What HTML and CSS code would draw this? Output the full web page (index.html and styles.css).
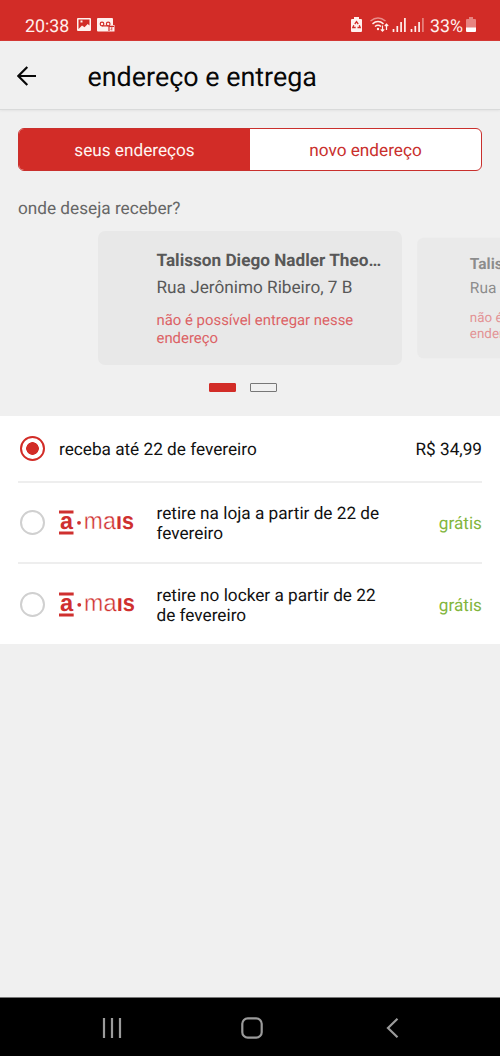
FILE: index.html
```html
<!DOCTYPE html>
<html lang="pt-BR">
<head>
<meta charset="utf-8">
<title>endereço e entrega</title>
<link rel="stylesheet" href="styles.css">
</head>
<body>
<div class="screen">
  <div class="status">
    <span class="clock">20:38</span>
    <svg class="status-left" width="40" height="16" viewBox="0 0 40 16">
      <path fill="#fff0ed" fill-rule="evenodd" d="M1 1h12a1 1 0 0 1 1 1v11a1 1 0 0 1-1 1H1a1 1 0 0 1-1-1V2a1 1 0 0 1 1-1zM1.500 2.500v9.500l3.500-3.500 2.500 1.800 3.200-3.300 1.800 1.500V2.500zM3.500 3.500h2v2h-2z"/>
      <path fill="#fff0ed" d="M21 1h14q1 0 1 1v6h1.500v6.500H21q-1 0-1-1V2q0-1 1-1z"/>
      <g fill="none" stroke="#d22c27" stroke-width="1.200"><circle cx="25" cy="7" r="1.800"/><circle cx="31.200" cy="7" r="1.800"/><path d="M25 8.900h6.200M32 14V9.300h5"/><path d="M33.800 10.800h1.500l-1.500 2h1.700" stroke-width=".7"/></g>
    </svg>
    <svg class="status-right" width="76" height="18" viewBox="0 0 76 18">
      <path fill="#fff0ed" d="M3 1h5v2h2q1 0 1 1v11q0 1-1 1H1q-1 0-1-1V4q0-1 1-1h2z"/>
      <path fill="none" stroke="#d22c27" stroke-width="1.300" d="M3.800 8l1.700-2.400L7.200 8M8.300 9.300l.9 2.200H6.500M4.700 11.500H1.800l1-2.200"/>
      <g fill="none" stroke="#fff0ed" stroke-width="1.500"><path opacity=".5" d="M19.500 5q7.500-6 15 0"/><path d="M21.500 7.800q5.500-4.500 11 0M24 10.500q3-2.400 6 0"/></g>
      <circle cx="27" cy="13" r="1.200" fill="#fff0ed"/>
      <path fill="none" stroke="#fff0ed" stroke-width="1.200" d="M31.500 9.500v5.500M29.800 13.300l1.700 1.900 1.700-1.900M35.500 14V8M33.800 10l1.700-1.900L37.200 10"/>
      <path fill="none" stroke="#fff0ed" stroke-width="1.700" d="M42.500 13v3M46.300 10v6M50.100 6v10M53.900 2v14M60.500 13v3M64.300 10v6M68.100 6v10"/>
      <path stroke="#fff0ed" stroke-width="1.700" opacity=".45" d="M71.900 2v14"/>
    </svg>
    <span class="percent">33%</span>
    <svg class="battery" width="10" height="15" viewBox="0 0 10 15"><path fill="#e78481" d="M3 0h4v2h2q1 0 1 1v8H0V3q0-1 1-1h2z"/><path fill="#fff" d="M0 10.500h10V14q0 1-1 1H1q-1 0-1-1z"/></svg>
  </div>
  <header class="header">
    <svg class="back" width="20" height="20" viewBox="0 0 20 20"><path d="M19 10H1.500M10.300 1L1.300 10l9 9" fill="none" stroke="#080808" stroke-width="2.200"/></svg>
    <h1 class="title">endereço e entrega</h1>
  </header>
  <div class="tabs">
    <div class="tab tab-active">seus endereços</div>
    <div class="tab">novo endereço</div>
  </div>
  <p class="question">onde deseja receber?</p>
  <div class="carousel">
    <div class="card">
      <div class="name">Talisson Diego Nadler Theo…</div>
      <div class="street">Rua Jerônimo Ribeiro, 7 B</div>
      <div class="warning">não é possível entregar nesse<br>endereço</div>
    </div>
    <div class="card card-next">
      <div class="name">Talisson Diego Nadler Theo…</div>
      <div class="street">Rua Jerônimo Ribeiro, 7 B</div>
      <div class="warning">não é possível entregar nesse<br>endereço</div>
    </div>
  </div>
  <div class="pages"><span class="page page-active"></span><span class="page"></span></div>
  <div class="options">
    <div class="option option-first">
      <span class="radio radio-on"></span>
      <span class="label">receba até 22 de fevereiro</span>
      <span class="price">R$ 34,99</span>
    </div>
    <div class="option">
      <span class="radio"></span>
      <svg class="logo" width="77" height="26" viewBox="0 0 77 26">
        <path d="M0 .5h14.500v2.900H0zM0 21.500h14.500v2.900H0z"/><circle cx="20" cy="12.800" r="1.900"/>
        <text class="logo-bold" x="1" y="19.200" textLength="13" lengthAdjust="spacingAndGlyphs">a</text>
        <text class="logo-light" x="24.700" y="19.200" textLength="19" lengthAdjust="spacingAndGlyphs">m</text>
        <text class="logo-light" x="44" y="19.200" textLength="13" lengthAdjust="spacingAndGlyphs">a</text>
        <text class="logo-bold" x="57" y="19.200" textLength="18" lengthAdjust="spacingAndGlyphs">ıs</text>
      </svg>
      <span class="label">retire na loja a partir de 22 de<br>fevereiro</span>
      <span class="price free">grátis</span>
    </div>
    <div class="option option-last">
      <span class="radio"></span>
      <svg class="logo" width="77" height="26" viewBox="0 0 76 26" preserveAspectRatio="none">
        <path d="M0 .5h14.500v2.900H0zM0 21.500h14.500v2.900H0z"/><circle cx="20" cy="12.800" r="1.900"/>
        <text class="logo-bold" x="1" y="19.200" textLength="13" lengthAdjust="spacingAndGlyphs">a</text>
        <text class="logo-light" x="24.700" y="19.200" textLength="19" lengthAdjust="spacingAndGlyphs">m</text>
        <text class="logo-light" x="44" y="19.200" textLength="13" lengthAdjust="spacingAndGlyphs">a</text>
        <text class="logo-bold" x="57" y="19.200" textLength="18" lengthAdjust="spacingAndGlyphs">ıs</text>
      </svg>
      <span class="label">retire no locker a partir de 22<br>de fevereiro</span>
      <span class="price free">grátis</span>
    </div>
  </div>
  <nav class="nav">
    <svg width="20" height="20" viewBox="0 0 20 20"><path d="M2 0v20M10 0v20M18 0v20"/></svg>
    <svg class="home" width="22" height="22" viewBox="0 0 22 22"><rect x="1.300" y="1.300" width="19.400" height="19.400" rx="5.500"/></svg>
    <svg width="13" height="20" viewBox="0 0 13 20"><path d="M11.500 .8L2 10l9.500 9.200"/></svg>
  </nav>
</div>
</body>
</html>
```
FILE: styles.css
```css
* { box-sizing: border-box; }
body { margin: 0; font-family: Roboto, "Liberation Sans", sans-serif; color: #111; background: #f0f0f0; text-rendering: geometricPrecision; }
.screen { width: 500px; height: 1056px; display: flex; flex-direction: column; overflow: hidden; background: #f0f0f0; }
.status { height: 41px; flex: none; background: #d22c27; color: #fff0ed; display: flex; align-items: flex-start; padding: 16px 24px 0 25px; font-size: 17.800px; line-height: 22px; }
.clock { width: 52px; }
.status-left { margin-top: 1px; }
.status-right { margin: 0 3px 0 auto; }
.percent { width: 33px; }
.battery { margin: 1px 0 0 3px; }
.header { height: 69px; flex: none; display: flex; align-items: center; padding: 1px 17px 0; border-bottom: 1px solid #d9dada; background: #f0f0f0; box-shadow: 0 1px 2px #e3e4e4; }
.back { margin-right: 50.500px; }
.title { margin: 3px 0 0; font-size: 26.900px; line-height: 34px; font-weight: 400; color: #080808; }
.tabs { height: 43px; flex: none; margin: 18px 18px 0; display: flex; border: 1px solid #c9302d; border-radius: 6px; overflow: hidden; background: #fff; }
.tab { flex: 1 1 0; min-width: 0; text-align: center; font-size: 17.200px; line-height: 43px; padding-top: 1px; color: #c9302d; }
.tab-active { background: #d22c27; color: #fff5f2; }
.question { flex: none; margin: 27px 18px 0; font-size: 17.200px; line-height: 22px; color: #666; }
.carousel { flex: none; height: 134px; margin-top: 11px; padding-left: 98px; display: flex; }
.card { flex: none; width: 304px; height: 134px; padding: 19px 0 0 58.500px; border-radius: 7px; background: #e8e8e8; color: #585858; white-space: nowrap; }
.card-next { transform: scale(.9); opacity: .65; }
.name { font-size: 17.200px; line-height: 22px; font-weight: 700; }
.street { margin-top: 5px; font-size: 17.200px; line-height: 22px; }
.warning { margin-top: 12px; font-size: 14.900px; line-height: 18px; color: #dc6265; }
.pages { flex: none; display: flex; gap: 14px; margin: 18px 0 0 209px; }
.page { width: 27px; height: 9px; border: 1px solid #777; border-radius: 1px; }
.page-active { background: #d22c27; border-color: #d22c27; }
.options { flex: none; margin-top: 24px; height: 228px; background: #fff; padding: 0 18px; }
.option { height: 81px; display: flex; align-items: center; padding-left: 2px; border-top: 2px solid #eee; font-size: 17.200px; line-height: 20px; }
.option-first { height: 65px; border-top: 0; }
.option-last { height: 82px; padding-top: 1px; }
.radio { flex: none; width: 25px; height: 25px; border: 2.500px solid #d0d0d0; border-radius: 50%; margin-right: 14px; }
.radio-on { border-color: #d22c27; background: radial-gradient(circle, #d22c27 0 6px, #fff 6.600px); }
.logo { flex: none; margin-right: 20.500px; fill: #cf302f; }
.logo-bold, .logo-light { font-family: "Liberation Sans", Arial, sans-serif; font-size: 24px; }
.logo-bold { font-weight: 700; }
.logo-light { stroke: #fff; stroke-width: .4px; }
.label { white-space: nowrap; padding-top: 3px; }
.option-first .label, .option-first .price { padding-top: 2px; }
.price { margin-left: auto; white-space: nowrap; }
.free { color: #82b53c; padding-top: 2px; }
.nav { margin-top: auto; height: 59px; flex: none; background: #000; display: flex; align-items: center; justify-content: space-between; padding: 2px 101px 0 102px; border-top: 1px solid #777; }
.nav svg { fill: none; stroke: #9b9b9b; stroke-width: 2.200; }
.nav .home { margin-right: 4px; }
```
